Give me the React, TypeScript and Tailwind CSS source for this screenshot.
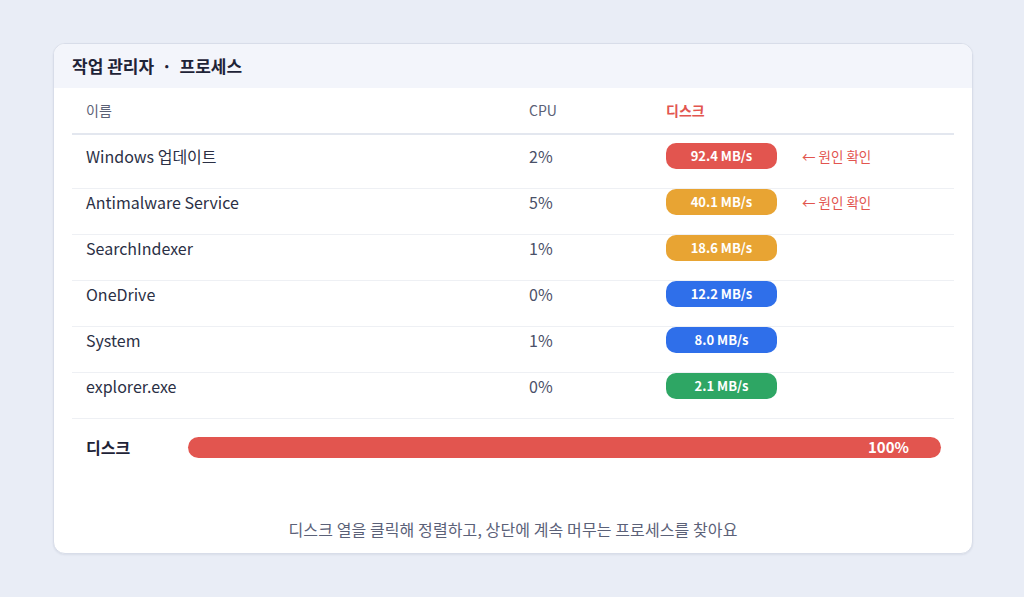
import React from "react"

type Proc = { name: string; cpu: string; disk: string; color: string; flag?: boolean }

const procs: Proc[] = [
  { name: "Windows 업데이트", cpu: "2%", disk: "92.4 MB/s", color: "bg-[#e2554f]", flag: true },
  { name: "Antimalware Service", cpu: "5%", disk: "40.1 MB/s", color: "bg-[#e8a433]", flag: true },
  { name: "SearchIndexer", cpu: "1%", disk: "18.6 MB/s", color: "bg-[#e8a433]" },
  { name: "OneDrive", cpu: "0%", disk: "12.2 MB/s", color: "bg-[#2f6fea]" },
  { name: "System", cpu: "1%", disk: "8.0 MB/s", color: "bg-[#2f6fea]" },
  { name: "explorer.exe", cpu: "0%", disk: "2.1 MB/s", color: "bg-[#2ea664]" },
]

export default function App() {
  return (
    <div
      className="w-[1024px] h-[597px] bg-[#e9edf6] pt-[43px]"
      style={{ fontFamily: '"Noto Sans CJK KR", "Noto Sans", sans-serif' }}
    >
      <div className="ml-[53px] w-[920px] h-[511px] rounded-[12px] bg-white border border-[#d8dde9] shadow-[0_1px_2px_rgba(30,40,80,0.08)] overflow-hidden flex flex-col">
        <div className="h-[44px] bg-[#f3f5fb] flex items-center px-[18px] text-[17px] font-semibold text-[#1e2337]">
          작업 관리자 &nbsp;·&nbsp; 프로세스
        </div>

        <div className="px-[18px] flex flex-col flex-1">
          <div className="h-[47px] border-b-2 border-[#e3e7ef] grid grid-cols-[443px_137px_1fr] items-center pl-[14px] text-[14px] text-[#5b6176]">
            <span>이름</span>
            <span>CPU</span>
            <span className="text-[#e2554f] font-semibold">디스크</span>
          </div>

          {procs.map((p, i) => (
            <div
              key={p.name}
              className={`grid grid-cols-[443px_137px_1fr] items-center pl-[14px] pb-[19px] ${
                i === 0 ? "pt-2" : "border-t border-[#eef0f4]"
              }`}
            >
              <span className="text-[16px] text-[#2b3045]">{p.name}</span>
              <span className="text-[16px] text-[#4a5068]">{p.cpu}</span>
              <div className="flex items-center gap-[25px]">
                <span
                  className={`${p.color} w-[111px] h-[26px] rounded-[10px] flex items-center justify-center text-white text-[13px] font-semibold`}
                >
                  {p.disk}
                </span>
                {p.flag && <span className="text-[13.5px] text-[#e2554f]">← 원인 확인</span>}
              </div>
            </div>
          ))}

          <div className="border-t border-[#eef0f4] pt-[16px] flex items-center pl-[14px] pr-[13px]">
            <span className="w-[102px] text-[16px] font-bold text-[#1e2337]">디스크</span>
            <div className="flex-1 h-[21px] rounded-full bg-[#e2554f] flex items-center justify-end pr-[32px] text-white text-[15px] font-semibold">
              100%
            </div>
          </div>

          <div className="mt-auto pb-[12px] text-center text-[16px] tracking-[0.1px] text-[#5b6178]">
            디스크 열을 클릭해 정렬하고, 상단에 계속 머무는 프로세스를 찾아요
          </div>
        </div>
      </div>
    </div>
  )
}
